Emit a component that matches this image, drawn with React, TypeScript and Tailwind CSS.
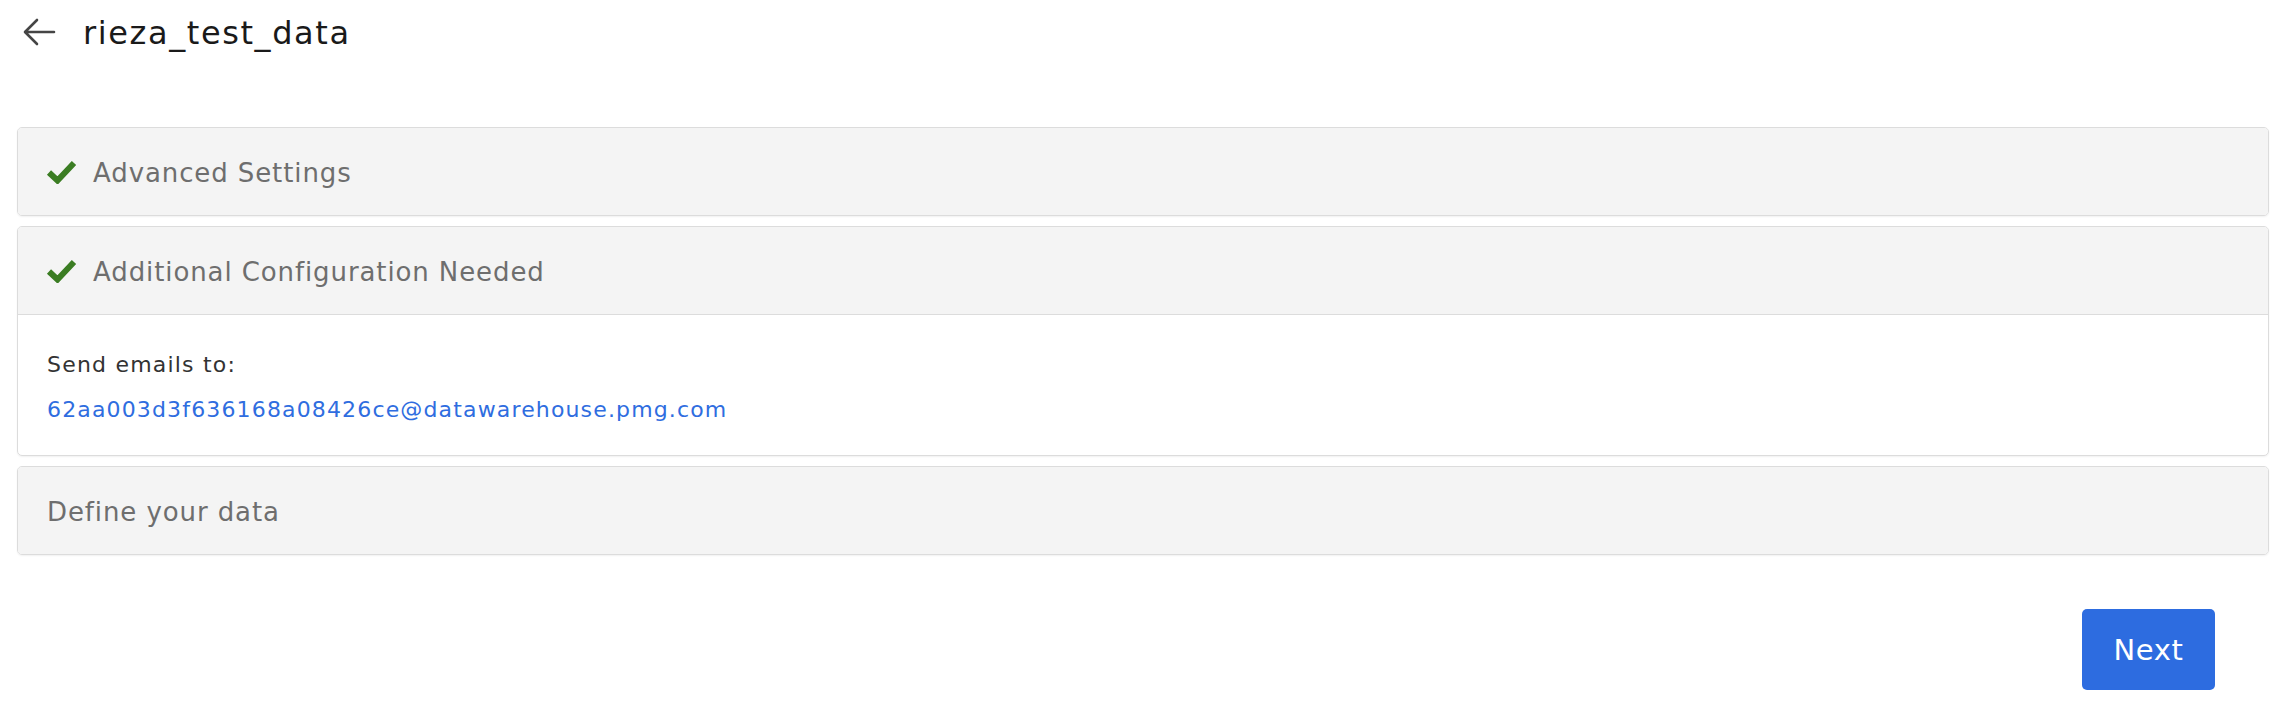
const font = { fontFamily: '"DejaVu Sans", "Open Sans", sans-serif' }

function Check() {
  return (
    <svg width="31" height="25" viewBox="0 0 31 25" className="shrink-0">
      <path d="M3 13.5 L11.5 21.5 L28 4" fill="none" stroke="#3b7d23" strokeWidth="6" strokeLinecap="butt" strokeLinejoin="miter" />
    </svg>
  )
}

function SectionHeader({ title, done }: { title: string; done?: boolean }) {
  return (
    <div className={`h-[87px] flex items-center bg-[#f4f4f4] ${done ? 'pl-[28px]' : 'pl-[29px]'}`}>
      {done && <Check />}
      <span className={`pt-[3px] text-[26px] tracking-[0.9px] text-[#6e6e6e] ${done ? 'ml-[16px]' : ''}`}>{title}</span>
    </div>
  )
}

export default function App() {
  return (
    <div className="w-[2294px] h-[720px] bg-white" style={font}>
      <div className="h-[64px] flex items-center pl-[22px]">
        <svg width="34" height="32" viewBox="0 0 34 32" className="shrink-0">
          <path d="M32 16 H4 M15 4 L3 16 L15 28" fill="none" stroke="#454545" strokeWidth="2.6" strokeLinecap="round" strokeLinejoin="round" />
        </svg>
        <h1 className="ml-[27px] pt-[2px] text-[32px] tracking-[1.6px] text-[#1a1a1a] leading-none">rieza_test_data</h1>
      </div>

      <div className="mt-[63px] ml-[17px] mr-[25px] flex flex-col gap-[10px]">
        <div className="rounded-[5px] border border-[#dcdcdc] overflow-hidden shadow-[0_1px_2px_rgba(0,0,0,0.06)]">
          <SectionHeader title="Advanced Settings" done />
        </div>

        <div className="rounded-[5px] border border-[#dcdcdc] overflow-hidden shadow-[0_1px_2px_rgba(0,0,0,0.06)]">
          <div className="border-b border-[#dcdcdc]">
            <SectionHeader title="Additional Configuration Needed" done />
          </div>
          <div className="h-[140px] pl-[29px] pt-[35px] flex flex-col gap-[16px]">
            <div className="text-[22px] tracking-[1.2px] text-[#333] leading-[29px]">Send emails to:</div>
            <a className="text-[22px] tracking-[1.15px] text-[#2f6de0] leading-[29px]" href="#">62aa003d3f636168a08426ce@datawarehouse.pmg.com</a>
          </div>
        </div>

        <div className="rounded-[5px] border border-[#dcdcdc] overflow-hidden shadow-[0_1px_2px_rgba(0,0,0,0.06)]">
          <SectionHeader title="Define your data" />
        </div>
      </div>

      <div className="flex justify-end mr-[79px] mt-[54px]">
        <button className="w-[133px] h-[81px] pt-[3px] rounded-[5px] bg-[#2d6ce0] text-white text-[29px] tracking-[0.6px]">Next</button>
      </div>
    </div>
  )
}
